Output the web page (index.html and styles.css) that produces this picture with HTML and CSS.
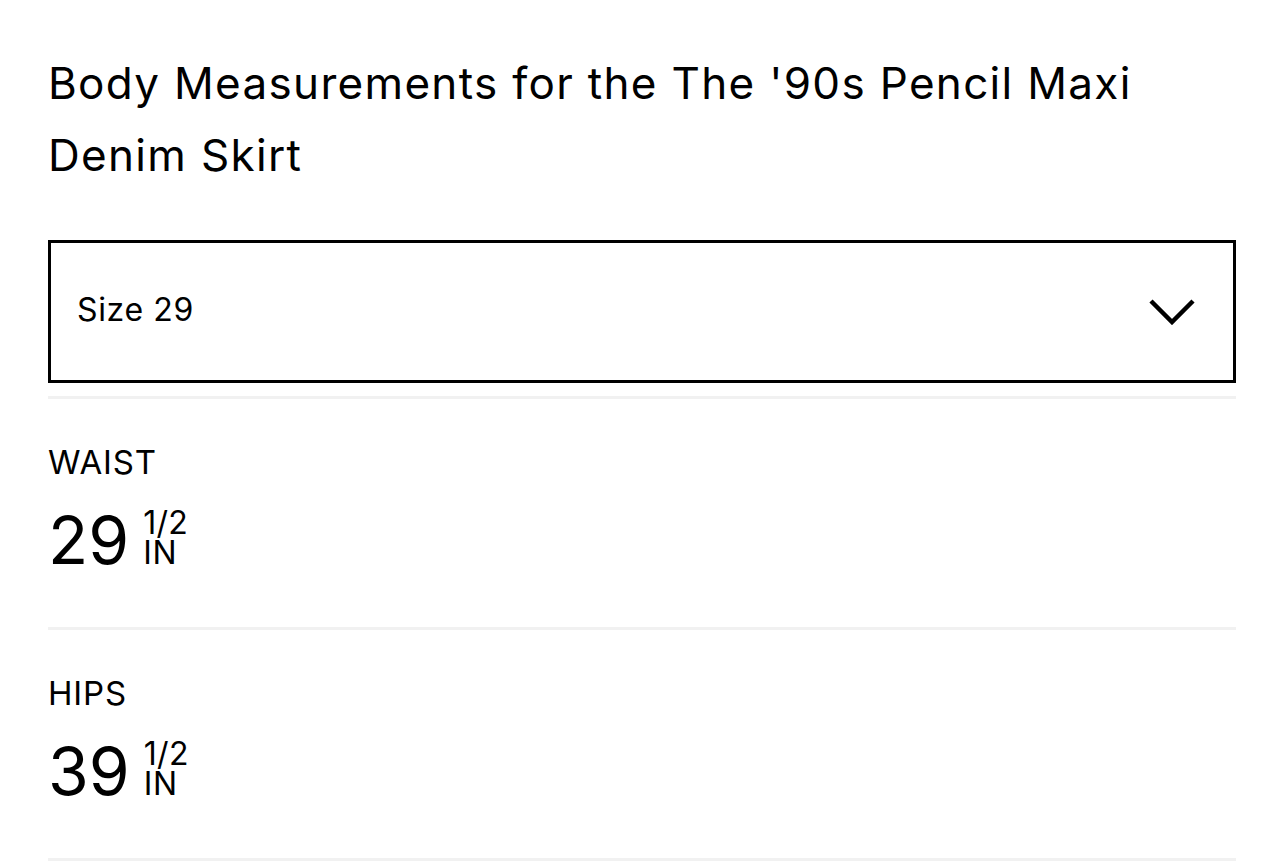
FILE: index.html
```html
<!DOCTYPE html>
<html lang="en">
<head>
<meta charset="utf-8">
<title>Body Measurements</title>
<link rel="stylesheet" href="styles.css">
</head>
<body>
<main class="page">
  <h1 class="title">Body Measurements for the The '90s Pencil Maxi Denim Skirt</h1>
  <div class="select">
    <span class="select-label">Size 29</span>
    <svg class="chevron" width="46" height="27" viewBox="0 0 46 27" aria-hidden="true">
      <path d="M2 3 L23 24 L44 3" fill="none" stroke="#000" stroke-width="4.5"/>
    </svg>
  </div>
  <ul class="measures">
    <li class="measure">
      <div class="measure-label">WAIST</div>
      <div class="measure-value">
        <span class="num">29</span>
        <span class="frac"><span class="frac-top">1/2</span><span class="frac-unit">IN</span></span>
      </div>
    </li>
    <li class="measure">
      <div class="measure-label">HIPS</div>
      <div class="measure-value">
        <span class="num">39</span>
        <span class="frac"><span class="frac-top">1/2</span><span class="frac-unit">IN</span></span>
      </div>
    </li>
  </ul>
</main>
</body>
</html>
```
FILE: styles.css
```css
* { box-sizing: border-box; }
html, body { margin: 0; padding: 0; background: #fff; }
body {
  font-family: "Inter", "Noto Sans", sans-serif;
  color: #000;
}
.page {
  padding: 47px 48px 0;
}
.title {
  margin: 0;
  font-size: 44px;
  line-height: 72px;
  font-weight: 400;
  letter-spacing: 0.03em;
  max-width: 1150px;
}
.select {
  margin-top: 49px;
  height: 143px;
  border: 3px solid #000;
  display: flex;
  align-items: center;
  justify-content: space-between;
  padding: 0 38px 5px 26px;
}
.select-label {
  font-size: 32px;
  letter-spacing: 0.02em;
}
.chevron { display: block; margin-top: 5px; }
.measures {
  list-style: none;
  margin: 13px 0 0;
  padding: 0;
  border-top: 3px solid #f1f1f1;
}
.measure {
  padding: 43px 0 51px;
  border-bottom: 3px solid #f1f1f1;
}
.measure-label {
  font-size: 33px;
  line-height: 40px;
  letter-spacing: 0.025em;
}
.measure-value {
  margin-top: 22px;
  height: 72px;
  display: flex;
  align-items: center;
}
.num {
  font-size: 66px;
  line-height: 72px;
  letter-spacing: 0;
}
.frac {
  display: flex;
  flex-direction: column;
  margin-left: 14px;
  font-size: 32px;
  line-height: 30px;
  margin-top: -4px;
}
.frac-top, .frac-unit { display: block; height: 30px; }
.frac-top { letter-spacing: 0.01em; }
.frac-unit { letter-spacing: 0.02em; }
```
